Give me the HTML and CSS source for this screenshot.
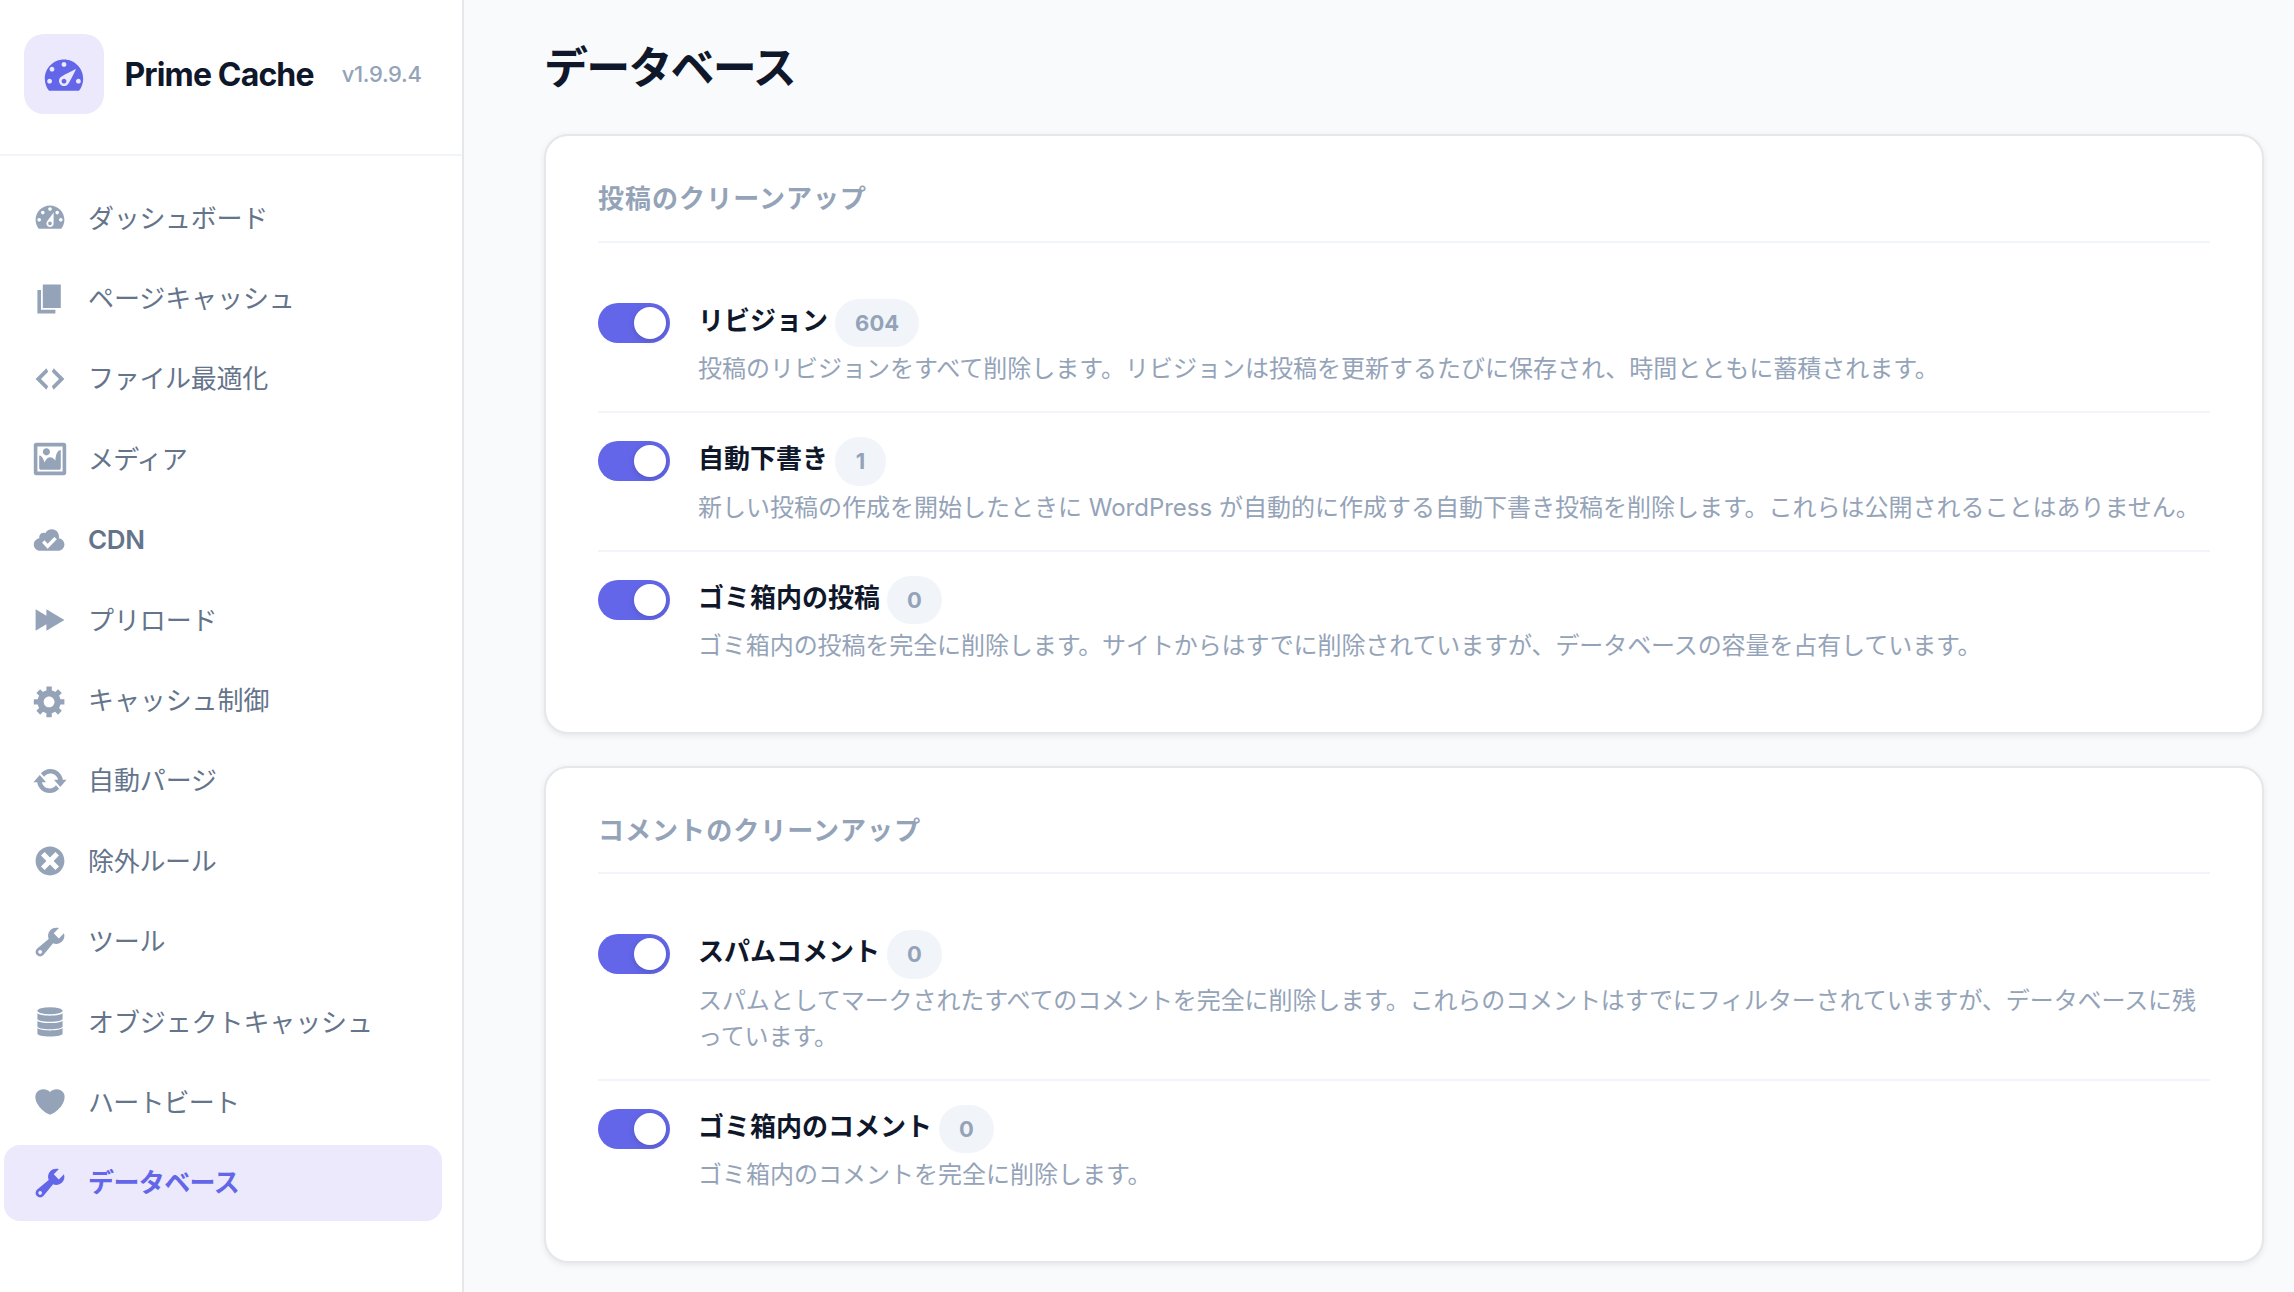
FILE: index.html
```html
<!DOCTYPE html>
<html lang="ja">
<head>
<meta charset="utf-8">
<title>Prime Cache - データベース</title>
<link rel="stylesheet" href="styles.css">
</head>
<body>
<div class="app">
  <aside class="sidebar">
    <div class="brand">
      <div class="brand-logo">
        <svg viewBox="0 0 20 20"><path d="M3.76 17.01h12.48C17.34 15.63 18 13.9 18 12c0-4.41-3.58-8-8-8s-8 3.59-8 8c0 1.9.66 3.63 1.76 5.01zM9 6c0-.55.45-1 1-1s1 .45 1 1c0 .56-.45 1-1 1s-1-.44-1-1zM4 8c0-.55.45-1 1-1s1 .45 1 1c0 .56-.45 1-1 1s-1-.44-1-1zm4.52 3.4c.84-.83 6.51-3.5 6.51-3.5s-2.66 5.68-3.49 6.51c-.84.84-2.18.84-3.02 0-.83-.83-.83-2.18 0-3.01zM3 13c0-.55.45-1 1-1s1 .45 1 1c0 .56-.45 1-1 1s-1-.44-1-1zm6 0c0-.55.45-1 1-1s1 .45 1 1c0 .56-.45 1-1 1s-1-.44-1-1zm6 0c0-.55.45-1 1-1s1 .45 1 1c0 .56-.45 1-1 1s-1-.44-1-1z"/></svg>
      </div>
      <span class="brand-name">Prime Cache</span>
      <span class="brand-version">v1.9.9.4</span>
    </div>
    <nav class="nav">
      <a class="nav-item snug"><svg viewBox="0 0 20 20"><path d="M3.76 16h12.48c1.1-1.37 1.76-3.11 1.76-5 0-4.42-3.58-8-8-8s-8 3.58-8 8c0 1.89.66 3.63 1.76 5zM10 4c.55 0 1 .45 1 1s-.45 1-1 1-1-.45-1-1 .45-1 1-1zM6 6c.55 0 1 .45 1 1s-.45 1-1 1-1-.45-1-1 .45-1 1-1zm8 0c.55 0 1 .45 1 1s-.45 1-1 1-1-.45-1-1 .45-1 1-1zm-5.37 5.55L12 7v6c0 1.1-.9 2-2 2s-2-.9-2-2c0-.57.24-1.08.63-1.45zM4 10c.55 0 1 .45 1 1s-.45 1-1 1-1-.45-1-1 .45-1 1-1zm12 0c.55 0 1 .45 1 1s-.45 1-1 1-1-.45-1-1 .45-1 1-1zm-5 3c0-.55-.45-1-1-1s-1 .45-1 1 .45 1 1 1 1-.45 1-1z"/></svg><span>ダッシュボード</span></a>
      <a class="nav-item"><svg viewBox="0 0 20 20"><path d="M6 15V2h10v13H6zm-1 1h8v2H3V5h2v11z"/></svg><span>ページキャッシュ</span></a>
      <a class="nav-item snug"><svg viewBox="0 0 20 20"><path d="M9 6l-4 4 4 4-1 2-6-6 6-6zm2 8l4-4-4-4 1-2 6 6-6 6z"/></svg><span>ファイル最適化</span></a>
      <a class="nav-item tight"><svg viewBox="0 0 20 20"><path d="M2.25 1h15.5c.69 0 1.25.56 1.25 1.25v15.5c0 .69-.56 1.25-1.25 1.25H2.25C1.56 19 1 18.44 1 17.75V2.25C1 1.56 1.56 1 2.25 1zM17 17V3H3v14h14zM10 6c0-1.1-.9-2-2-2s-2 .9-2 2 .9 2 2 2 2-.9 2-2zm3 5s0-6 3-6v10c0 .55-.45 1-1 1H5c-.55 0-1-.45-1-1V8c2 0 3 4 3 4s1-3 3-3 3 2 3 2z"/></svg><span>メディア</span></a>
      <a class="nav-item latin"><svg viewBox="0 0 20 20"><path fill-rule="evenodd" d="M14.9 9c1.8.2 3.1 1.7 3.1 3.5 0 1.9-1.6 3.5-3.5 3.5h-10C2.6 16 1 14.4 1 12.5 1 10.7 2.3 9.3 4.1 9 4 8.9 4 8.7 4 8.5 4 7.1 5.1 6 6.5 6c.3 0 .7.1.9.2C8.1 4.9 9.4 4 11 4c2.2 0 4 1.8 4 4 0 .4-.1.7-.1 1zM5.6 11.5l3.1 3.4 5.1-5.3-1.4-1.3-3.7 3.8-1.8-1.9z"/></svg><span>CDN</span></a>
      <a class="nav-item"><svg viewBox="0 0 20 20"><path d="M2 4l6 3.6V4l10 6-10 6v-3.6L2 16z"/></svg><span>プリロード</span></a>
      <a class="nav-item"><svg viewBox="0 0 20 20"><path d="M18 12h-2.18c-.17.7-.44 1.35-.81 1.93l1.54 1.54-2.1 2.1-1.54-1.54c-.58.36-1.23.63-1.91.79V19H8v-2.18c-.68-.16-1.33-.43-1.91-.79l-1.54 1.54-2.12-2.12 1.54-1.54c-.36-.58-.63-1.23-.79-1.91H1V9.03h2.17c.16-.7.44-1.35.8-1.94L2.43 5.55l2.1-2.1 1.54 1.54c.58-.37 1.24-.64 1.93-.81V2h3v2.18c.68.16 1.33.43 1.91.79l1.54-1.54 2.12 2.12-1.54 1.54c.36.59.64 1.24.8 1.94H18V12zm-8.5 1.5c1.66 0 3-1.34 3-3s-1.34-3-3-3-3 1.34-3 3 1.34 3 3 3z"/></svg><span>キャッシュ制御</span></a>
      <a class="nav-item"><svg viewBox="0 0 20 20"><path d="M10.2 3.28c3.53 0 6.43 2.61 6.92 6h2.08l-3.5 4-3.5-4h2.32c-.45-1.97-2.21-3.45-4.32-3.45-1.45 0-2.73.71-3.54 1.78L4.95 5.66C6.23 4.2 8.11 3.28 10.2 3.28zm-.4 13.44c-3.52 0-6.43-2.61-6.92-6H.8l3.5-4c1.17 1.33 2.33 2.67 3.5 4H5.48c.45 1.97 2.21 3.45 4.32 3.45 1.45 0 2.73-.71 3.54-1.78l1.71 1.95c-1.28 1.46-3.15 2.38-5.25 2.38z"/></svg><span>自動パージ</span></a>
      <a class="nav-item snug"><svg viewBox="0 0 20 20"><path d="M10 2c4.42 0 8 3.58 8 8s-3.58 8-8 8-8-3.58-8-8 3.58-8 8-8zm5 11l-3-3 3-3-2-2-3 3-3-3-2 2 3 3-3 3 2 2 3-3 3 3z"/></svg><span>除外ルール</span></a>
      <a class="nav-item snug"><svg viewBox="0 0 20 20"><path d="M16.68 9.77c-1.34 1.34-3.3 1.67-4.95.99l-5.41 6.52c-.99.99-2.59.99-3.58 0s-.99-2.59 0-3.57l6.52-5.42c-.68-1.65-.35-3.61.99-4.95 1.28-1.28 3.12-1.62 4.72-1.06l-2.89 2.89 2.82 2.82 2.86-2.87c.53 1.58.18 3.39-1.08 4.65zM3.81 16.21c.4.39 1.04.39 1.43 0 .4-.4.4-1.04 0-1.43-.39-.4-1.03-.4-1.43 0-.39.39-.39 1.03 0 1.43z"/></svg><span>ツール</span></a>
      <a class="nav-item"><svg viewBox="0 0 20 20"><ellipse cx="10" cy="3.8" rx="7" ry="1.95"/><path d="M3 5.2C3.6 6 6.4 6.5 10 6.5s6.4-.5 7-1.3v3c0 1-3 1.7-7 1.7s-7-.7-7-1.7zM3 9.3c.6.8 3.4 1.3 7 1.3s6.4-.5 7-1.3v3c0 1-3 1.7-7 1.7s-7-.7-7-1.7zM3 13.4c.6.8 3.4 1.3 7 1.3s6.4-.5 7-1.3v3c0 1-3 1.7-7 1.7s-7-.7-7-1.7z"/></svg><span>オブジェクトキャッシュ</span></a>
      <a class="nav-item tight"><svg viewBox="0 0 20 20"><path d="M10 17.12c3.33-1.4 5.74-3.79 7.04-6.21 1.28-2.41 1.46-4.81.32-6.25-1.03-1.29-2.37-1.78-3.73-1.74s-2.68.63-3.63 1.46c-.95-.83-2.27-1.42-3.63-1.46s-2.7.45-3.73 1.74c-1.14 1.44-.96 3.84.34 6.25 1.28 2.42 3.69 4.81 7.02 6.21z"/></svg><span>ハートビート</span></a>
      <a class="nav-item tight active"><svg viewBox="0 0 20 20"><path d="M16.68 9.77c-1.34 1.34-3.3 1.67-4.95.99l-5.41 6.52c-.99.99-2.59.99-3.58 0s-.99-2.59 0-3.57l6.52-5.42c-.68-1.65-.35-3.61.99-4.95 1.28-1.28 3.12-1.62 4.72-1.06l-2.89 2.89 2.82 2.82 2.86-2.87c.53 1.58.18 3.39-1.08 4.65zM3.81 16.21c.4.39 1.04.39 1.43 0 .4-.4.4-1.04 0-1.43-.39-.4-1.03-.4-1.43 0-.39.39-.39 1.03 0 1.43z"/></svg><span>データベース</span></a>
    </nav>
  </aside>

  <main class="main">
    <h1 class="page-title">データベース</h1>

    <section class="card">
      <h2 class="card-title">投稿のクリーンアップ</h2>
      <div class="row">
        <span class="toggle"></span>
        <div class="row-body">
          <div class="row-label">リビジョン<span class="badge">604</span></div>
          <p class="row-desc">投稿のリビジョンをすべて削除します。リビジョンは投稿を更新するたびに保存され、時間とともに蓄積されます。</p>
        </div>
      </div>
      <div class="row">
        <span class="toggle"></span>
        <div class="row-body">
          <div class="row-label">自動下書き<span class="badge">1</span></div>
          <p class="row-desc">新しい投稿の作成を開始したときに WordPress が自動的に作成する自動下書き投稿を削除します。これらは公開されることはありません。</p>
        </div>
      </div>
      <div class="row">
        <span class="toggle"></span>
        <div class="row-body">
          <div class="row-label">ゴミ箱内の投稿<span class="badge">0</span></div>
          <p class="row-desc condensed">ゴミ箱内の投稿を完全に削除します。サイトからはすでに削除されていますが、データベースの容量を占有しています。</p>
        </div>
      </div>
    </section>

    <section class="card">
      <h2 class="card-title">コメントのクリーンアップ</h2>
      <div class="row">
        <span class="toggle"></span>
        <div class="row-body">
          <div class="row-label">スパムコメント<span class="badge">0</span></div>
          <p class="row-desc condensed">スパムとしてマークされたすべてのコメントを完全に削除します。これらのコメントはすでにフィルターされていますが、データベースに残っています。</p>
        </div>
      </div>
      <div class="row">
        <span class="toggle"></span>
        <div class="row-body">
          <div class="row-label">ゴミ箱内のコメント<span class="badge">0</span></div>
          <p class="row-desc">ゴミ箱内のコメントを完全に削除します。</p>
        </div>
      </div>
    </section>
  </main>
</div>
</body>
</html>
```
FILE: styles.css
```css
* {
  box-sizing: border-box;
}

body {
  margin: 0;
  background: #f8fafc;
  color: #0f172a;
  font-family: Inter, "Noto Sans CJK JP", sans-serif;
}

.app {
  display: flex;
  height: 1292px;
  overflow: hidden;
}

/* Sidebar */
.sidebar {
  flex: none;
  width: 464px;
  background: #fff;
  border-right: 2px solid #e5e7eb;
}

.brand {
  display: flex;
  align-items: center;
  height: 156px;
  padding: 0 0 6px 24px;
  border-bottom: 2px solid #f1f5f9;
}

.brand-logo {
  display: flex;
  align-items: center;
  justify-content: center;
  width: 80px;
  height: 80px;
  border-radius: 20px;
  background: #ece9fc;
}

.brand-logo svg {
  width: 48px;
  height: 48px;
  fill: #6366e8;
}

.brand-name {
  margin-left: 20.5px;
  font-size: 32px;
  font-weight: 700;
  letter-spacing: -0.86px;
  white-space: nowrap;
}

.brand-version {
  margin-left: 28px;
  font-size: 22px;
  font-weight: 500;
  letter-spacing: -0.3px;
  color: #94a3b8;
}

.nav {
  display: flex;
  flex-direction: column;
  gap: 4px;
  padding: 24px 20px 0 4px;
}

.nav-item {
  display: flex;
  align-items: center;
  gap: 20px;
  height: 76.4px;
  padding-left: 28px;
  border-radius: 16px;
  color: #64748b;
  font-size: 26px;
  font-weight: 400;
  line-height: 40px;
  letter-spacing: -0.1px;
}

.nav-item span {
  padding-top: 1px;
}

.nav-item svg {
  flex: none;
  width: 36px;
  height: 36px;
  fill: #94a3b8;
}

.nav-item.snug {
  letter-spacing: -0.3px;
}

.nav-item.tight {
  letter-spacing: -0.8px;
}

.nav-item.latin {
  font-weight: 600;
  letter-spacing: -0.4px;
}

.nav-item.active {
  background: #ece9fc;
  color: #6366e8;
  font-weight: 700;
  letter-spacing: -0.6px;
}

.nav-item.active svg {
  fill: #6366e8;
}

/* Main column */
.main {
  flex: 1;
  padding: 38px 30px 0 80px;
}

.page-title {
  height: 60px;
  margin: 0 0 36px;
  font-size: 44px;
  font-weight: 700;
  line-height: 61px;
  letter-spacing: -1.8px;
}

.card {
  margin-bottom: 32px;
  padding: 0 52px 43.35px;
  border: 2px solid #e5e7eb;
  border-radius: 24px;
  background: #fff;
  box-shadow: 0 2px 6px rgba(0, 0, 0, 0.08);
}

.card-title {
  height: 106.8px;
  margin: 0 0 32px;
  padding-top: 43px;
  border-bottom: 2px solid #f1f5f9;
  color: #94a3b8;
  font-size: 26px;
  font-weight: 700;
  line-height: 40px;
  letter-spacing: 1.04px;
}

.row {
  display: flex;
  align-items: flex-start;
  gap: 28px;
  padding: 24px 0;
  border-bottom: 2px solid #f1f5f9;
}

.row:last-child {
  border-bottom: 0;
}

.toggle {
  flex: none;
  display: flex;
  justify-content: flex-end;
  width: 72px;
  height: 40px;
  margin-top: 4px;
  padding: 4px;
  border-radius: 20px;
  background: #6366e8;
}

.toggle::after {
  content: "";
  width: 32px;
  height: 32px;
  border-radius: 50%;
  background: #fff;
  box-shadow: 0 2px 6px rgba(0, 0, 0, 0.15);
}

.row-body {
  flex: 1;
  min-width: 0;
}

.row-label {
  display: flex;
  height: 48.5px;
  margin-bottom: 4px;
  font-size: 26px;
  font-weight: 700;
  line-height: 44px;
}

.badge {
  min-width: 51px;
  margin-left: 7px;
  padding: 0 20px;
  border-radius: 24px;
  background: #f1f5f9;
  color: #94a3b8;
  font-size: 22px;
  font-weight: 700;
  line-height: 49px;
  letter-spacing: 0.1px;
  text-align: center;
}

.row-desc {
  margin: 0;
  color: #94a3b8;
  font-size: 24px;
  line-height: 36px;
}

.row-desc.condensed {
  letter-spacing: -0.09px;
}
```
